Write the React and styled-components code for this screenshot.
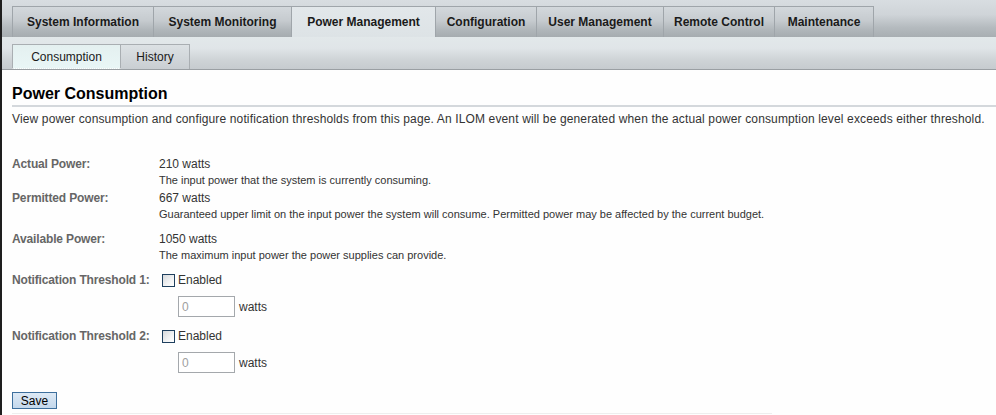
import styled, { createGlobalStyle } from 'styled-components';

const GlobalStyle = createGlobalStyle`
  body {
    margin: 0;
    background: #fefefe;
    font-family: "Liberation Sans", Arial, sans-serif;
  }
`;

const StyledPage = styled.div`
  min-height: 415px;
  border-left: 2px solid #1e1e1e;
  box-sizing: border-box;
  overflow: hidden;
`;

const StyledTopBar = styled.div`
  display: flex;
  height: 37px;
  padding: 6px 0 0 10px;
  box-sizing: border-box;
  background: linear-gradient(#d8dde1 0%, #cfd4d8 40%, #b4babe 75%, #a8aeb2 100%);
`;

const StyledTopTab = styled.div`
  display: flex;
  align-items: center;
  justify-content: center;
  width: ${(props) => props.$width}px;
  height: 31px;
  box-sizing: border-box;
  border: 1px solid #9fa5aa;
  border-left-width: ${(props) => (props.$first ? 1 : 0)}px;
  border-bottom: none;
  background: ${(props) =>
    props.$active
      ? 'linear-gradient(#e2e7ea, #dde3e6)'
      : 'linear-gradient(#d3d8dc 0%, #c6cbcf 45%, #b1b7bb 75%, #a6acb0 100%)'};
  color: #1a1a1a;
  font-size: 12px;
  font-weight: bold;
`;

const StyledSubBar = styled.div`
  display: flex;
  height: 33px;
  padding: 7px 0 0 10px;
  box-sizing: border-box;
  border-bottom: 1px solid #9a9fa3;
  background: linear-gradient(#e2e8ea 0%, #e0e5e8 35%, #cfd4d7 70%, #c6cbcf 100%);
`;

const StyledSubTab = styled.div`
  display: flex;
  align-items: center;
  justify-content: center;
  width: ${(props) => props.$width}px;
  height: 25px;
  box-sizing: border-box;
  border: 1px solid #a9aeb2;
  border-left-width: ${(props) => (props.$first ? 1 : 0)}px;
  border-bottom: ${(props) => (props.$active ? '1px dotted #ffffff' : 'none')};
  background: ${(props) =>
    props.$active ? 'linear-gradient(#e4f0f0, #e9f6f6)' : 'linear-gradient(#dce1e4, #c9ced2)'};
  color: #1a1a1a;
  font-size: 12px;
`;

const StyledContent = styled.div`
  padding: 15px 0 0 10px;
  color: #333;
`;

const StyledTitle = styled.h1`
  margin: 0;
  padding: 0 0 2px 0;
  border-bottom: 2px solid #d4d8dc;
  font-size: 16px;
  font-weight: bold;
  color: #000;
  line-height: 18px;
`;

const StyledIntro = styled.p`
  margin: 5px 0 0 0;
  font-size: 12px;
  line-height: 14px;
  letter-spacing: 0.14px;
  color: #333;
`;

const StyledForm = styled.div`
  display: grid;
  grid-template-columns: 147px 1fr;
  margin-top: 31px;
`;

const StyledLabel = styled.div`
  font-size: 12px;
  font-weight: bold;
  letter-spacing: -0.15px;
  color: #666;
  line-height: 14px;
`;

const StyledValueCell = styled.div`
  padding-bottom: ${(props) => props.$bottom || 0}px;
`;

const StyledValue = styled.div`
  font-size: 12px;
  line-height: 14px;
  color: #333;
`;

const StyledHint = styled.div`
  margin-top: 3px;
  font-size: 11px;
  line-height: 13px;
  color: #333;
`;

const StyledCheckRow = styled.label`
  display: flex;
  align-items: center;
  gap: 3px;
  padding-left: 3px;
  font-size: 12px;
  color: #333;
  line-height: 14px;
`;

const StyledCheckbox = styled.span`
  width: 13px;
  height: 13px;
  box-sizing: border-box;
  border: 1px solid #1e3f5e;
  background: linear-gradient(135deg, #d6d9dc 0%, #f2f3f4 60%, #ffffff 100%);
`;

const StyledInputRow = styled.div`
  display: flex;
  align-items: center;
  gap: 4px;
  margin: 9px 0 0 19px;
  font-size: 12px;
  color: #333;
`;

const StyledInput = styled.input`
  width: 57px;
  height: 21px;
  box-sizing: border-box;
  padding: 0 0 0 3px;
  border: 1px solid #a4a8ac;
  font-family: "Liberation Sans", Arial, sans-serif;
  font-size: 12px;
  color: #a0a0a0;
  background: #fff;
  outline: none;
`;

const StyledSaveButton = styled.button`
  display: block;
  width: 45px;
  height: 17px;
  margin-top: 19px;
  padding: 0;
  border: 1px solid #3d6f9d;
  background: linear-gradient(#dde9f5, #c4d8ec);
  font-family: "Liberation Sans", Arial, sans-serif;
  font-size: 12px;
  color: #000;
`;

const StyledFooterLine = styled.div`
  width: 760px;
  margin-top: 4px;
  border-top: 1px solid #eeeeee;
`;

const topTabs = [
  { label: 'System Information', width: 142 },
  { label: 'System Monitoring', width: 138 },
  { label: 'Power Management', width: 144, active: true },
  { label: 'Configuration', width: 101 },
  { label: 'User Management', width: 127 },
  { label: 'Remote Control', width: 111 },
  { label: 'Maintenance', width: 99 },
];

const subTabs = [
  { label: 'Consumption', width: 109, active: true },
  { label: 'History', width: 69 },
];

const powerRows = [
  { label: 'Actual Power:', value: '210 watts', hint: 'The input power that the system is currently consuming.', bottom: 4 },
  {
    label: 'Permitted Power:',
    value: '667 watts',
    hint: 'Guaranteed upper limit on the input power the system will consume. Permitted power may be affected by the current budget.',
    bottom: 11,
  },
  { label: 'Available Power:', value: '1050 watts', hint: 'The maximum input power the power supplies can provide.', bottom: 11 },
];

const thresholds = ['Notification Threshold 1:', 'Notification Threshold 2:'];

const App = () => {
  return (
    <StyledPage>
      <GlobalStyle />
      <StyledTopBar>
        {topTabs.map((tab, i) => (
          <StyledTopTab key={tab.label} $width={tab.width} $active={tab.active} $first={i === 0}>
            {tab.label}
          </StyledTopTab>
        ))}
      </StyledTopBar>
      <StyledSubBar>
        {subTabs.map((tab, i) => (
          <StyledSubTab key={tab.label} $width={tab.width} $active={tab.active} $first={i === 0}>
            {tab.label}
          </StyledSubTab>
        ))}
      </StyledSubBar>
      <StyledContent>
        <StyledTitle>Power Consumption</StyledTitle>
        <StyledIntro>
          View power consumption and configure notification thresholds from this page. An ILOM event will be generated when the actual power consumption level exceeds either threshold.
        </StyledIntro>
        <StyledForm>
          {powerRows.flatMap((row) => [
            <StyledLabel key={row.label}>{row.label}</StyledLabel>,
            <StyledValueCell key={row.label + '-v'} $bottom={row.bottom}>
              <StyledValue>{row.value}</StyledValue>
              <StyledHint>{row.hint}</StyledHint>
            </StyledValueCell>,
          ])}
          {thresholds.flatMap((label, i) => [
            <StyledLabel key={label}>{label}</StyledLabel>,
            <StyledValueCell key={label + '-v'} $bottom={i === 0 ? 12 : 0}>
              <StyledCheckRow>
                <StyledCheckbox />
                Enabled
              </StyledCheckRow>
              <StyledInputRow>
                <StyledInput defaultValue="0" />
                watts
              </StyledInputRow>
            </StyledValueCell>,
          ])}
        </StyledForm>
        <StyledSaveButton>Save</StyledSaveButton>
        <StyledFooterLine />
      </StyledContent>
    </StyledPage>
  );
};

export default App;
